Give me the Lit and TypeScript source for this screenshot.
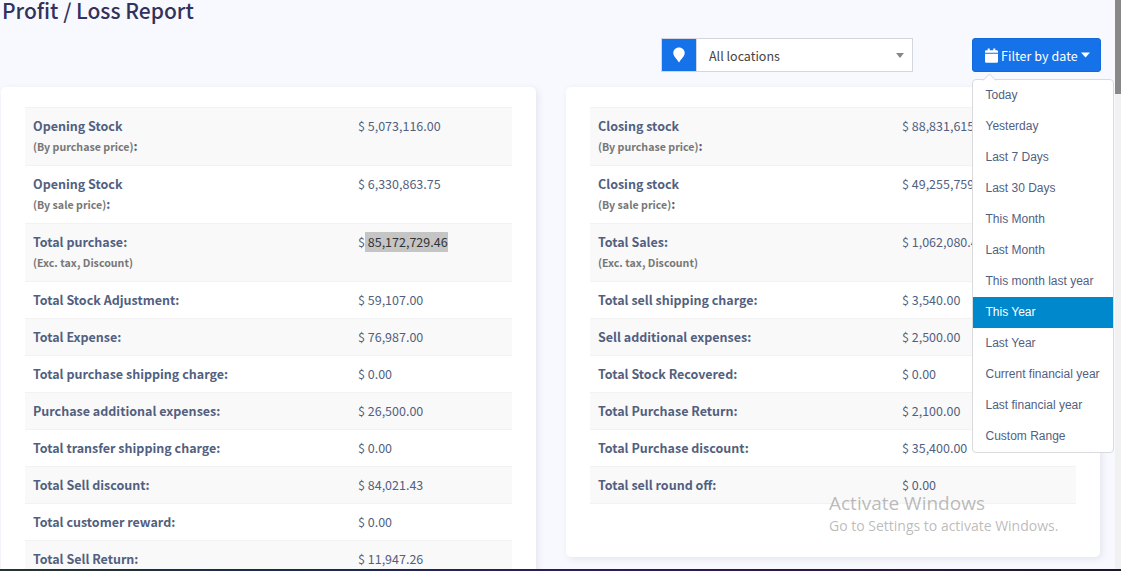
import { LitElement, html, css, nothing } from "lit";
import { customElement, property } from "lit/decorators.js";

interface Row {
  label: string;
  note?: string;
  colon?: boolean;
  value: string;
  selected?: boolean;
}

const LEFT: Row[] = [
  { label: "Opening Stock", note: "(By purchase price)", colon: true, value: "5,073,116.00" },
  { label: "Opening Stock", note: "(By sale price)", colon: true, value: "6,330,863.75" },
  { label: "Total purchase:", note: "(Exc. tax, Discount)", value: "85,172,729.46", selected: true },
  { label: "Total Stock Adjustment:", value: "59,107.00" },
  { label: "Total Expense:", value: "76,987.00" },
  { label: "Total purchase shipping charge:", value: "0.00" },
  { label: "Purchase additional expenses:", value: "26,500.00" },
  { label: "Total transfer shipping charge:", value: "0.00" },
  { label: "Total Sell discount:", value: "84,021.43" },
  { label: "Total customer reward:", value: "0.00" },
  { label: "Total Sell Return:", value: "11,947.26" },
];

const RIGHT: Row[] = [
  { label: "Closing stock", note: "(By purchase price)", colon: true, value: "88,831,615.00" },
  { label: "Closing stock", note: "(By sale price)", colon: true, value: "49,255,759.00" },
  { label: "Total Sales:", note: "(Exc. tax, Discount)", value: "1,062,080.40" },
  { label: "Total sell shipping charge:", value: "3,540.00" },
  { label: "Sell additional expenses:", value: "2,500.00" },
  { label: "Total Stock Recovered:", value: "0.00" },
  { label: "Total Purchase Return:", value: "2,100.00" },
  { label: "Total Purchase discount:", value: "35,400.00" },
  { label: "Total sell round off:", value: "0.00" },
];

const RANGES = [
  "Today", "Yesterday", "Last 7 Days", "Last 30 Days", "This Month", "Last Month",
  "This month last year", "This Year", "Last Year", "Current financial year",
  "Last financial year", "Custom Range",
];

@customElement("report-table")
export class ReportTable extends LitElement {
  static styles = css`
    :host { display: block; }
    .row {
      display: grid;
      grid-template-columns: 325px 1fr;
      box-sizing: border-box;
      min-height: 37px;
      padding: 9px 8px 8px;
      column-gap: 0;
      border-top: 1px solid #f2f2f3;
      padding-top: 8px;
      font-size: 12.5px;
      line-height: 20px;
      color: #525f7f;
      white-space: nowrap;
    }
    .row.right { grid-template-columns: 304px 1fr; }
    .row:nth-child(odd) { background: #f9f9f9; }
    .row:last-child { border-bottom: 1px solid #f2f2f3; }
    .label { font-weight: 700; }
    .note { font-size: 10.65px; color: #777; }
    .sel { background: #c5c5c5; color: #333; display: inline-block; white-space: pre; }
  `;
  @property({ attribute: false }) rows: Row[] = [];
  @property() side = "left";

  render() {
    return this.rows.map(
      (r) => html`<div class="row ${this.side}">
        <div class="label">
          <div>${r.label}</div>
          ${r.note ? html`<div><span class="note">${r.note}</span>${r.colon ? ":" : nothing}</div>` : nothing}
        </div>
        <div>$${r.selected ? html`<span class="sel"> ${r.value}</span>` : html` ${r.value}`}</div>
      </div>`
    );
  }
}

@customElement("date-menu")
export class DateMenu extends LitElement {
  static styles = css`
    :host {
      display: block;
      box-sizing: border-box;
      width: 142px;
      border: 1px solid #d9dade;
      border-radius: 4px;
      background: #fff;
      font: 12px/31px "Liberation Sans", Arial, sans-serif;
      color: #525f7f;
      white-space: nowrap;
    }
    .item { height: 31px; padding-left: 12.5px; }
    .active { background: #0088cc; color: #fff; }
    .arrow { position: absolute; left: 9px; top: -7px; display: block; }
  `;
  render() {
    return html`
      <svg class="arrow" width="15" height="8" viewBox="0 0 15 8">
        <path d="M1 7.5 7.5 1 14 7.5V8H1z" fill="#fff" />
        <path d="M1 7.5 7.5 1 14 7.5" fill="none" stroke="#d3d5da" />
      </svg>
      ${RANGES.map((t) => html`<div class="item ${t === "This Year" ? "active" : ""}">${t}</div>`)}
    `;
  }
}

@customElement("app-root")
export class AppRoot extends LitElement {
  static styles = css`
    :host {
      display: flex;
      flex-direction: column;
      position: relative;
      width: 1121px;
      height: 571px;
      overflow: hidden;
      background: #f8f9fe;
      font-family: "Noto Sans CJK SC", "Noto Sans", sans-serif;
    }
    .view { display: flex; height: 569px; overflow: hidden; }
    .content { flex: 1; padding-left: 1px; min-width: 0; }
    .title {
      margin: 0;
      height: 38px;
      padding-left: 1px;
      font-size: 21px;
      font-weight: 500;
      line-height: 21px;
      color: #32325d;
      white-space: nowrap;
    }
    .filters { display: flex; justify-content: flex-end; gap: 59px; height: 49px; padding-right: 14px; }
    .location {
      display: flex;
      box-sizing: border-box;
      width: 252px;
      height: 34px;
      border: 1px solid #d2d6de;
      background: #fff;
    }
    .pin {
      display: grid;
      place-items: center;
      width: 34px;
      background: #1572e8;
      border-right: 1px solid #d2d6de;
    }
    .choice {
      flex: 1;
      display: flex;
      align-items: center;
      justify-content: space-between;
      padding: 0 8px 0 12px;
      font-size: 12.5px;
      color: #444;
    }
    .date { position: relative; width: 129px; height: 34px; }
    .button {
      display: flex;
      align-items: center;
      box-sizing: border-box;
      height: 34px;
      padding-left: 12px;
      border: 1px solid #1269db;
      border-radius: 3px;
      background: #1572e8;
      color: #fff;
      font-size: 12.5px;
      white-space: nowrap;
    }
    .text { padding: 0 3px 0 3px; letter-spacing: 0.05px; }
    .menu { position: absolute; left: 0; top: 41px; z-index: 2; }
    .cards { display: flex; align-items: flex-start; gap: 30px; }
    .card {
      box-sizing: border-box;
      width: 535px;
      height: 560px;
      padding: 20px 24px;
      border-radius: 5px;
      background: #fff;
      box-shadow: 2px 2px 7px rgba(50, 60, 110, 0.1);
    }
    .card.short { width: 534px; height: 470px; }
    .bar { width: 6px; background: #f1f1f1; }
    .thumb { height: 94px; background: #888; }
    .strip { height: 2px; background: linear-gradient(90deg, #26332f, #1b2b4a 25%, #2c1a5c 55%, #2a1740 75%, #1c1826); }
    .notice {
      position: absolute;
      left: 829px;
      top: 490px;
      color: rgba(130, 130, 130, 0.55);
      font-family: "Open Sans", "Noto Sans", sans-serif;
      white-space: nowrap;
    }
    .big { font-size: 19px; line-height: 26px; }
    .small { font-size: 14px; line-height: 20px; }
  `;
  render() {
    return html`
      <div class="view">
        <div class="content">
          <h1 class="title">Profit / Loss Report</h1>
          <div class="filters">
            <div class="location">
              <div class="pin">
                <svg width="12" height="16" viewBox="0 0 12 16">
                  <path d="M6 .5C2.8.5.3 2.900.3 6c0 3.300 3.400 5.500 5.700 9.600 2.300-4.100 5.700-6.300 5.700-9.600C11.700 2.900 9.200.5 6 .5z" fill="#fff" />
                </svg>
              </div>
              <div class="choice">
                <span>All locations</span>
                <svg width="8" height="5" viewBox="0 0 8 5"><path d="M0 0h8L4 5z" fill="#888" /></svg>
              </div>
            </div>
            <div class="date">
              <div class="button">
                <svg width="13" height="15" viewBox="0 0 13 15">
                  <path d="M0 5.700h13v7.800a1.300 1.300 0 0 1-1.300 1.300H1.300A1.300 1.300 0 0 1 0 13.500zM0 4.800V3.500a1.300 1.300 0 0 1 1.300-1.300H2.700V.5h2v1.700h3.600V.5h2v1.700h1.400A1.300 1.300 0 0 1 13 3.500v1.300z" fill="#fff" />
                </svg>
                <span class="text">Filter by date</span>
                <svg width="9" height="6" viewBox="0 0 9 6"><path d="M0 .5h9L4.500 5.500z" fill="#fff" /></svg>
              </div>
              <date-menu class="menu"></date-menu>
            </div>
          </div>
          <div class="cards">
            <div class="card"><report-table .rows=${LEFT}></report-table></div>
            <div class="card short"><report-table side="right" .rows=${RIGHT}></report-table></div>
          </div>
        </div>
        <div class="bar"><div class="thumb"></div></div>
      </div>
      <div class="strip"></div>
      <div class="notice">
        <div class="big">Activate Windows</div>
        <div class="small">Go to Settings to activate Windows.</div>
      </div>
    `;
  }
}
